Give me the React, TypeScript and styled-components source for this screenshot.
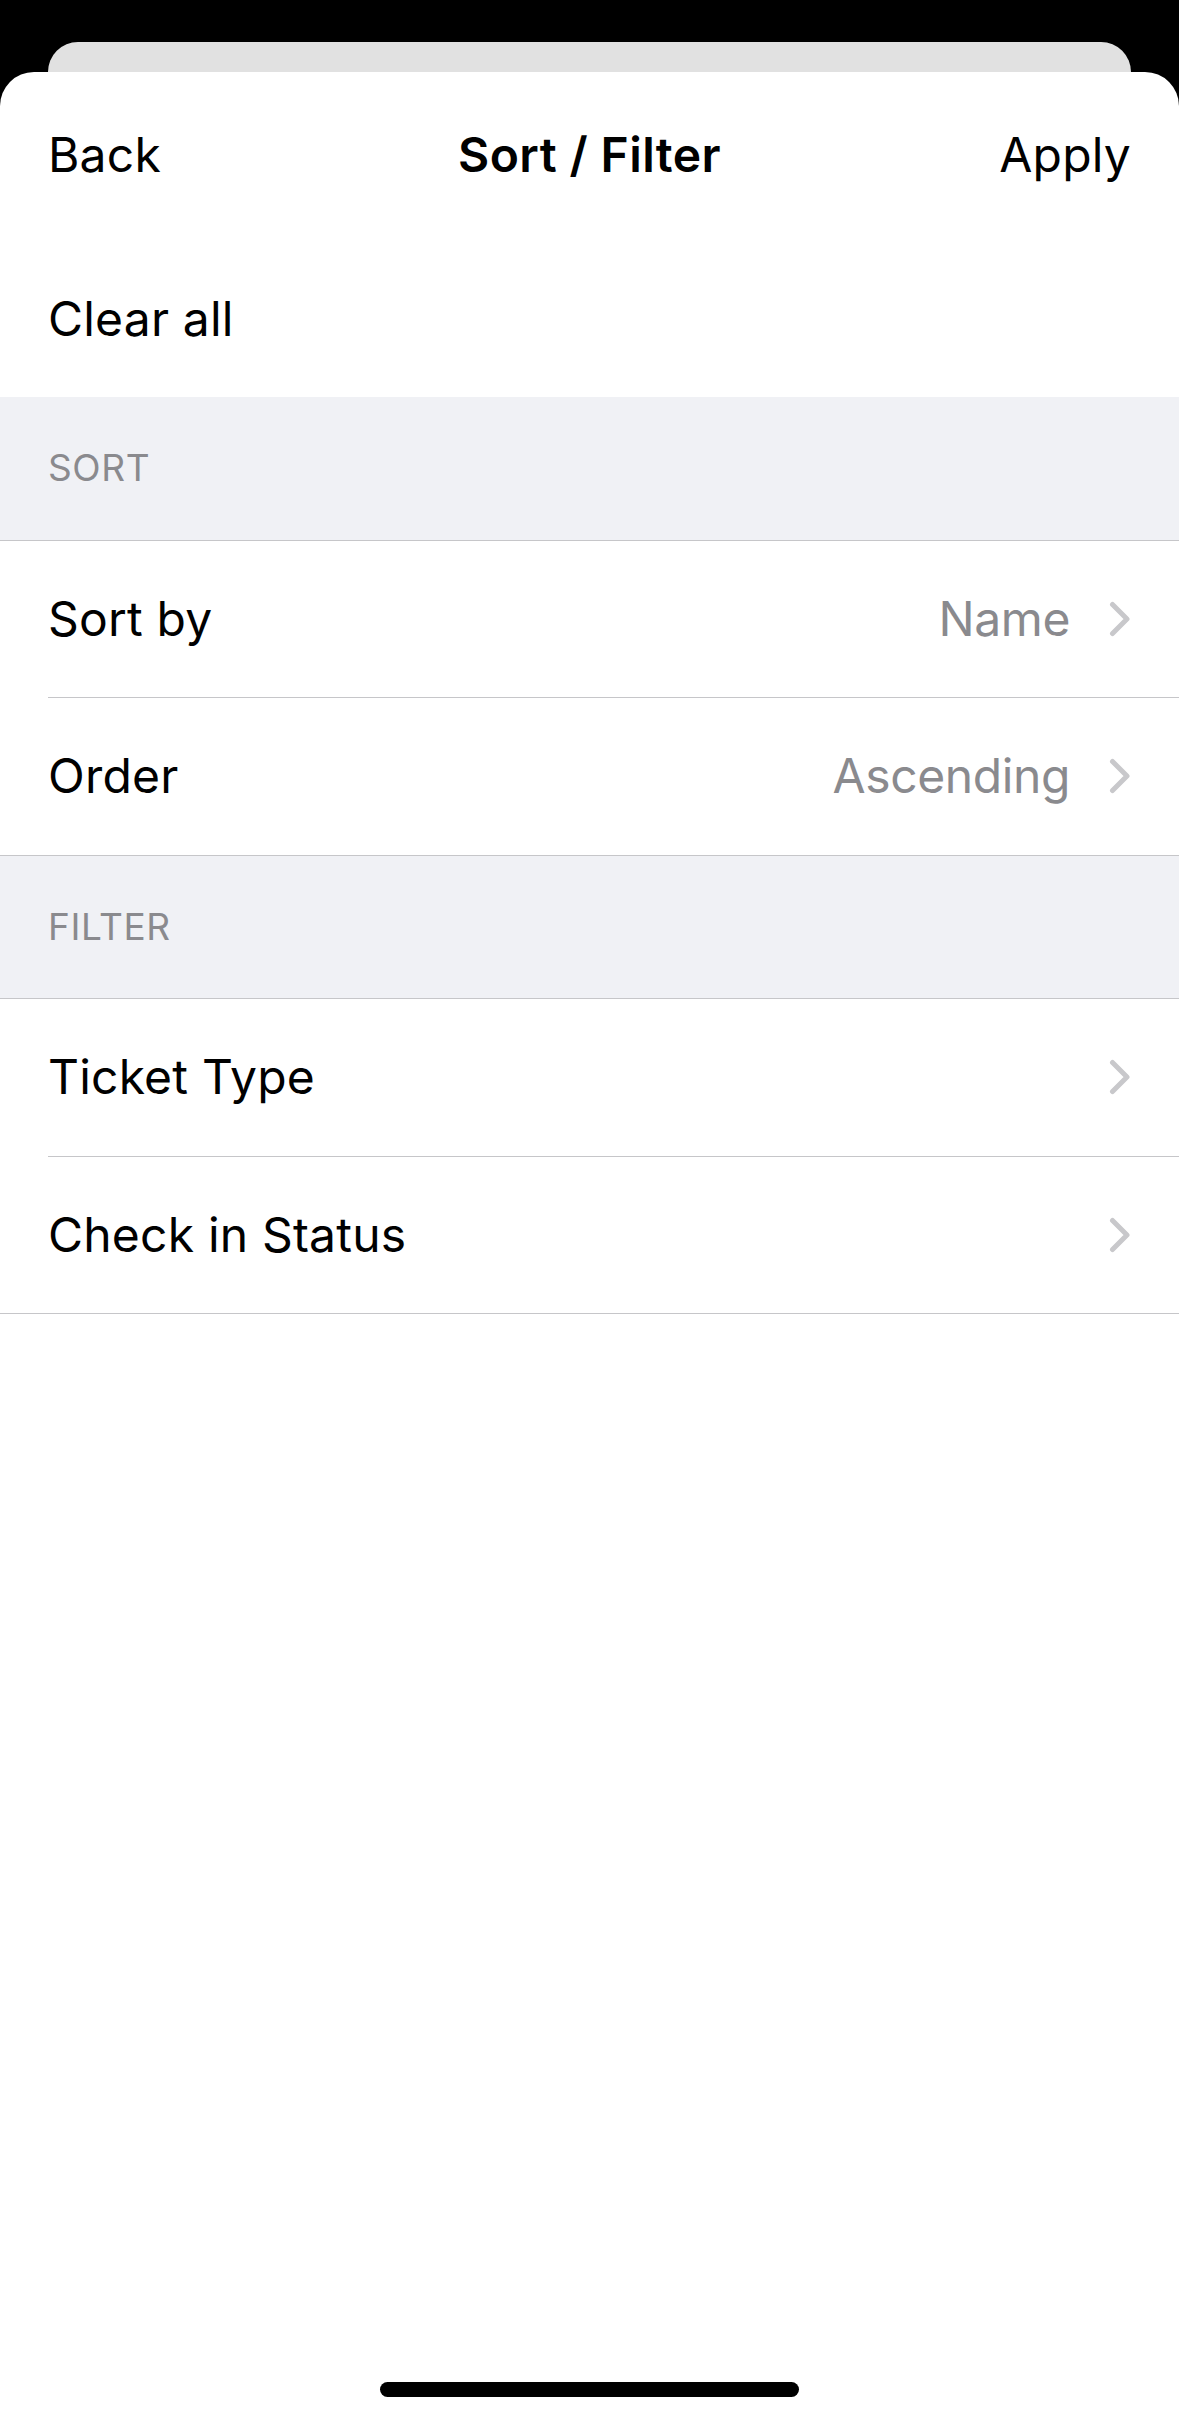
import React from "react";
import styled, { createGlobalStyle } from "styled-components";

const Global = createGlobalStyle`
  html, body { margin: 0; padding: 0; background: #000; }
  body { font-family: Inter, "Noto Sans", "Liberation Sans", sans-serif; -webkit-font-smoothing: antialiased; }
  * { box-sizing: border-box; }
`;

const Screen = styled.div`
  position: relative;
  width: 1179px;
  height: 2421px;
  background: #000;
  display: flex;
  flex-direction: column;
  overflow: hidden;
`;

const BackCard = styled.div`
  margin: 42px 48px 0;
  height: 30px;
  background: #e1e1e1;
  border-radius: 30px 30px 0 0;
  flex: none;
`;

const Sheet = styled.div`
  flex: 1;
  background: #fff;
  border-radius: 34px 34px 0 0;
  display: flex;
  flex-direction: column;
`;

const NavBar = styled.div`
  display: grid;
  grid-template-columns: 1fr auto 1fr;
  align-items: center;
  padding: 54px 48px 0;
  font-size: 48px;
  line-height: 58px;
  letter-spacing: 0.2px;
  color: #000;
`;

const NavButton = styled.span<{ $align: "left" | "right" }>`
  justify-self: ${(p) => (p.$align === "left" ? "start" : "end")};
  font-weight: 400;
`;

const Title = styled.span`
  font-weight: 600;
  letter-spacing: 0.4px;
`;

const ClearRow = styled.div`
  padding: 106px 48px 49px;
  font-size: 48px;
  line-height: 58px;
  letter-spacing: 0.2px;
  color: #000;
`;

const SectionHeader = styled.div`
  height: 143.5px;
  padding: 48px 48px 0;
  background: #f0f1f5;
  border-bottom: 1px solid #c6c6c9;
  font-size: 37px;
  line-height: 46px;
  color: #8a8a8e;
  letter-spacing: 0.6px;
`;

const Row = styled.div`
  padding-left: 48px;
  display: flex;
  background: #fff;
`;

const RowInner = styled.div<{ $last?: boolean }>`
  flex: 1;
  height: 157.5px;
  display: flex;
  align-items: center;
  padding-right: 48px;
  border-bottom: 1px solid #c6c6c9;
  margin-left: ${(p) => (p.$last ? "-48px" : "0")};
  padding-left: ${(p) => (p.$last ? "48px" : "0")};
`;

const RowLabel = styled.span`
  flex: 1;
  font-size: 48px;
  line-height: 58px;
  letter-spacing: 0.2px;
  color: #000;
`;

const RowValue = styled.span`
  font-size: 48px;
  line-height: 58px;
  letter-spacing: -0.4px;
  color: #8a8a8e;
  margin-right: 39px;
`;

const Chevron = styled.svg`
  width: 22px;
  height: 36px;
  flex: none;
`;

const HomeIndicator = styled.div`
  position: absolute;
  left: 380px;
  bottom: 24px;
  width: 419px;
  height: 15px;
  border-radius: 8px;
  background: #000;
`;

const ChevronIcon = () => (
  <Chevron viewBox="0 0 22 36">
    <path
      d="M3.5 3.5 L18 18 L3.5 32.5"
      fill="none"
      stroke="#c8c8cb"
      strokeWidth="5"
      strokeLinecap="round"
      strokeLinejoin="round"
    />
  </Chevron>
);

type Item = { label: string; value?: string };

const Group = ({ items }: { items: Item[] }) => (
  <>
    {items.map((it, i) => (
      <Row key={it.label}>
        <RowInner $last={i === items.length - 1}>
          <RowLabel>{it.label}</RowLabel>
          {it.value && <RowValue>{it.value}</RowValue>}
          <ChevronIcon />
        </RowInner>
      </Row>
    ))}
  </>
);

export default function App() {
  return (
    <>
      <Global />
      <Screen>
        <BackCard />
        <Sheet>
          <NavBar>
            <NavButton $align="left">Back</NavButton>
            <Title>Sort / Filter</Title>
            <NavButton $align="right">Apply</NavButton>
          </NavBar>
          <ClearRow>Clear all</ClearRow>
          <SectionHeader>SORT</SectionHeader>
          <Group
            items={[
              { label: "Sort by", value: "Name" },
              { label: "Order", value: "Ascending" },
            ]}
          />
          <SectionHeader>FILTER</SectionHeader>
          <Group items={[{ label: "Ticket Type" }, { label: "Check in Status" }]} />
        </Sheet>
        <HomeIndicator />
      </Screen>
    </>
  );
}
